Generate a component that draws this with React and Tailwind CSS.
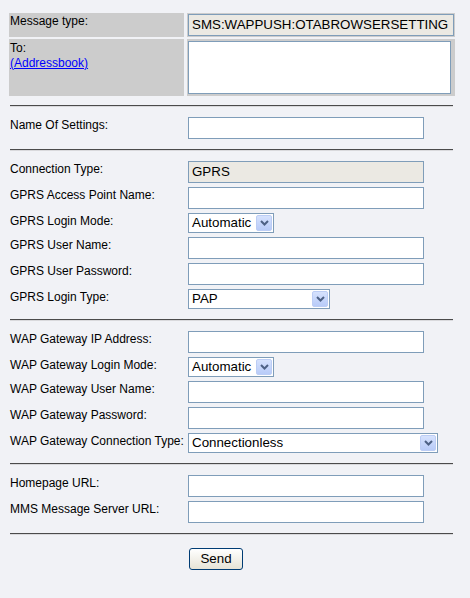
import React from 'react';

const FONT = { fontFamily: '"Liberation Sans", Arial, sans-serif' };

function Hr() {
  return <div className="ml-[10px] w-[443px] h-[2px] border-t border-[#4b4b4b] border-b border-b-[#d9d9dc]" />;
}

function TextInput({ value = '', disabled = false, width = 'w-[236px]' }) {
  return (
    <div
      className={`${width} h-[22px] border border-[#7f9db9] flex items-center px-[3px] text-[13.33px] text-black ${
        disabled ? 'bg-[#ebe9e3]' : 'bg-white'
      }`}
    >
      {value}
    </div>
  );
}

function Arrow() {
  return (
    <div className="w-[16px] h-[16px] rounded-[2px] border border-[#bccdf5] bg-gradient-to-b from-[#d6e2fd] to-[#b8cbf8] flex items-center justify-center">
      <svg width="9" height="6" viewBox="0 0 9 6">
        <path d="M1 1 L4.5 4.5 L8 1" fill="none" stroke="#4d6185" strokeWidth="2" />
      </svg>
    </div>
  );
}

function FakeSelect({ value, width }) {
  return (
    <div className={`${width} h-[20px] border border-[#7f9db9] bg-white flex items-center justify-between pl-[3px] pr-[1px] text-[13.33px] text-black`}>
      <span className="leading-none">{value}</span>
      <Arrow />
    </div>
  );
}

function Row({ label, children }) {
  return (
    <div className="flex items-start">
      <div className="w-[188px] shrink-0 pl-[10px] pt-[1px] leading-[14px] text-[12px] text-black whitespace-nowrap">{label}</div>
      {children}
    </div>
  );
}

function Section({ children }) {
  return <div className="flex flex-col gap-[4px] py-[10px]">{children}</div>;
}

export default function App() {
  return (
    <div className="min-h-[598px] w-full bg-[#f1f2f6] pt-[13px]" style={FONT}>
      {/* Header table */}
      <div className="ml-[9px] grid grid-cols-[175px_268px] gap-x-[3px] gap-y-[2px] w-[446px]">
        <div className="h-[24px] bg-[#cccccc] pl-[1px] pt-[1px] text-[12px] leading-[14px] text-black">Message type:</div>
        <div className="h-[24px] bg-[#cccccc] p-[1px]">
          <div className="w-[266px] h-[22px] border border-[#7f9db9] bg-[#ebe9e3] flex items-center px-[3px] text-[13.33px] text-black overflow-hidden whitespace-nowrap">
            SMS:WAPPUSH:OTABROWSERSETTING
          </div>
        </div>
        <div className="h-[57px] bg-[#cccccc] pl-[1px] pt-[2px] text-[12px] leading-[15px] text-black">
          <div>To:</div>
          <a href="#" className="text-[#0000ff] underline">(Addressbook)</a>
        </div>
        <div className="h-[57px] bg-[#cccccc] pl-[1px] pt-[2px]">
          <div className="w-[263px] h-[53px] border border-[#7f9db9] bg-white" />
        </div>
      </div>

      <div className="h-[9px]" />
      <Hr />
      <Section>
        <Row label="Name Of Settings:"><TextInput /></Row>
      </Section>
      <Hr />
      <Section>
        <Row label="Connection Type:"><TextInput value="GPRS" disabled /></Row>
        <Row label="GPRS Access Point Name:"><TextInput /></Row>
        <Row label="GPRS Login Mode:"><FakeSelect value="Automatic" width="w-[86px]" /></Row>
        <Row label="GPRS User Name:"><TextInput /></Row>
        <Row label="GPRS User Password:"><TextInput /></Row>
        <Row label="GPRS Login Type:"><FakeSelect value="PAP" width="w-[142px]" /></Row>
      </Section>
      <Hr />
      <Section>
        <Row label="WAP Gateway IP Address:"><TextInput /></Row>
        <Row label="WAP Gateway Login Mode:"><FakeSelect value="Automatic" width="w-[86px]" /></Row>
        <Row label="WAP Gateway User Name:"><TextInput /></Row>
        <Row label="WAP Gateway Password:"><TextInput /></Row>
        <Row label="WAP Gateway Connection Type:"><FakeSelect value="Connectionless" width="w-[250px]" /></Row>
      </Section>
      <Hr />
      <Section>
        <Row label="Homepage URL:"><TextInput /></Row>
        <Row label="MMS Message Server URL:"><TextInput /></Row>
      </Section>
      <Hr />
      <div className="pl-[189px] pt-[11px]">
        <button className="w-[54px] h-[22px] rounded-[3px] border border-[#003c74] bg-gradient-to-b from-white to-[#e6e3d6] text-[13.33px] text-black leading-none">
          Send
        </button>
      </div>
    </div>
  );
}
